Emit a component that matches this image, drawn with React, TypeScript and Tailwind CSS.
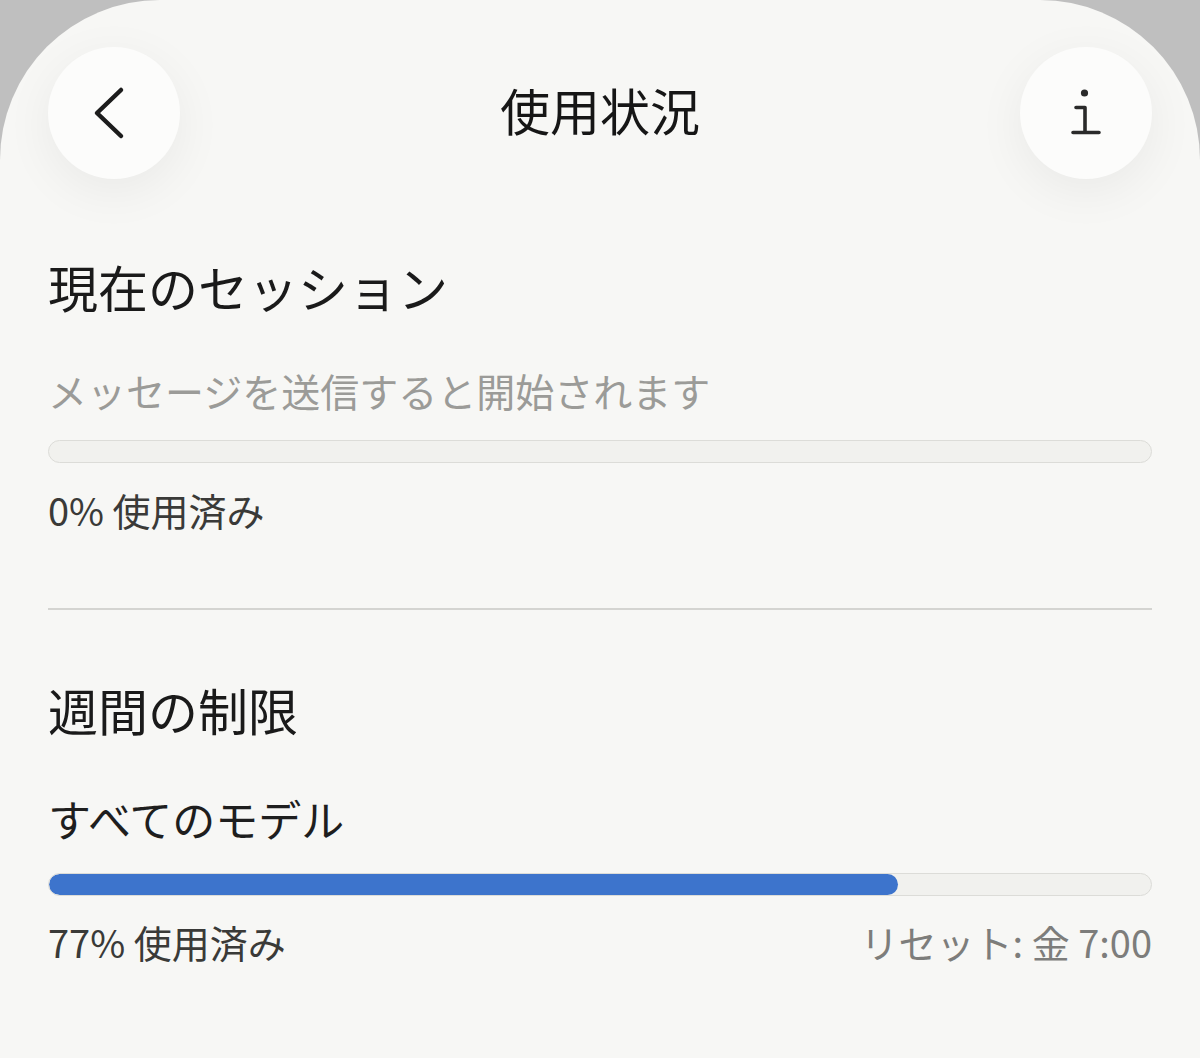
import React from "react";

const FONT = { fontFamily: '"Noto Sans CJK JP", "Noto Sans", sans-serif' };

function UsageBar({ value }: { value: number }) {
  return (
    <div className="w-full h-[23px] rounded-full bg-[#f1f1ee] border border-[#dcdcd8] overflow-hidden">
      {value > 0 && (
        <div className="h-full rounded-full bg-[#3d74cc]" style={{ width: `${value}%` }} />
      )}
    </div>
  );
}

function CircleButton({ children }: { children: React.ReactNode }) {
  return (
    <button className="w-[132px] h-[132px] rounded-full bg-[#fcfcfb] shadow-[0_12px_50px_rgba(0,0,0,0.06)] flex items-center justify-center shrink-0">
      {children}
    </button>
  );
}

export default function App() {
  return (
    <div className="w-full h-[1058px] bg-[#bfbfbf]" style={FONT}>
      <div className="h-full rounded-t-[160px] bg-[#f7f7f5] px-12 pt-[47px]">
        <div className="flex items-center justify-between h-[132px]">
          <CircleButton>
            <svg width="132" height="132" viewBox="0 0 132 132" fill="none">
              <path
                d="M73 43 L49 66 L73 89"
                stroke="#1c1c1c"
                strokeWidth="4.5"
                strokeLinecap="round"
                strokeLinejoin="round"
              />
            </svg>
          </CircleButton>
          <h1 className="pb-[8px] text-[50px] leading-none text-[#161616] font-normal">使用状況</h1>
          <CircleButton>
            <svg width="132" height="132" viewBox="0 0 132 132" fill="none">
              <circle cx="64.5" cy="46" r="3.6" fill="#2a2a2a" />
              <path
                d="M56 60.5 H65 V85.5 M53 85.5 H79"
                stroke="#2a2a2a"
                strokeWidth="3.6"
                strokeLinecap="round"
                strokeLinejoin="round"
              />
            </svg>
          </CircleButton>
        </div>

        <h2 className="mt-[82px] text-[50px] leading-[50px] text-[#1a1a1a]">現在のセッション</h2>
        <p className="mt-[60px] text-[39px] leading-[39px] text-[#9b9b98]">
          メッセージを送信すると開始されます
        </p>
        <div className="mt-[30px]">
          <UsageBar value={0} />
        </div>
        <p className="mt-[28px] text-[38px] leading-[38px] text-[#3a3a38]">0% 使用済み</p>

        <div className="mt-[79px] h-[2px] bg-[#d4d4d1]" />

        <h2 className="mt-[74px] text-[50px] leading-[50px] text-[#1a1a1a]">週間の制限</h2>
        <p className="mt-[63px] text-[43px] leading-[43px] text-[#1e1e1e]">すべてのモデル</p>
        <div className="mt-[33px]">
          <UsageBar value={77} />
        </div>
        <div className="mt-[27px] flex items-center justify-between text-[38px] leading-[38px]">
          <span className="text-[#3a3a38]">77% 使用済み</span>
          <span className="text-[#7d7d7b]">リセット: 金 7:00</span>
        </div>
      </div>
    </div>
  );
}
